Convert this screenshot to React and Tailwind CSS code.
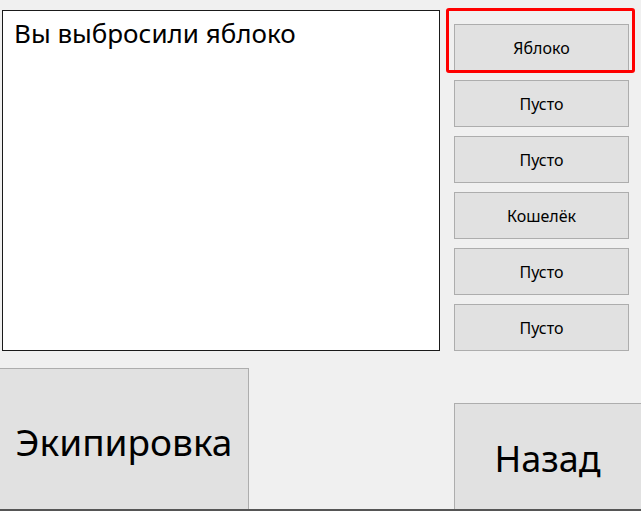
export default function App() {
  const slots = ["Яблоко", "Пусто", "Пусто", "Кошелёк", "Пусто", "Пусто"];
  return (
    <div
      className="relative w-[641px] h-[511px] overflow-hidden bg-[#f0f0f0] text-black flex flex-col font-['Comic_Sans_MS','Noto_Sans','DejaVu_Sans',sans-serif]"
    >
      <div className="flex pt-[10px]">
        <div className="shrink-0 ml-[2px] w-[438px] h-[341px] bg-white border border-[#1a1a1a] px-[11px] pt-[4px] text-[26px] leading-[36px]">
          Вы выбросили яблоко
        </div>
        <div className="relative shrink-0 ml-[14px] pt-[14px] flex flex-col gap-[9px]">
          {slots.map((s, i) => (
            <div
              key={i}
              className="w-[175px] h-[47px] bg-[#e1e1e1] border border-[#adadad] flex items-center justify-center text-[16px]"
            >
              {s}
            </div>
          ))}
          <div className="absolute left-[-8px] top-[-2px] w-[189px] h-[65px] border-[3px] border-[#ff0000] rounded-[3px] pointer-events-none" />
        </div>
      </div>
      <div className="mt-[17px] flex items-end h-[141px]">
        <div className="shrink-0 w-[249px] h-[141px] bg-[#e1e1e1] border-t border-r border-[#adadad] flex items-center justify-center text-[37px] pt-[6px]">
          Экипировка
        </div>
        <div className="shrink-0 ml-[205px] w-[190px] h-[106px] bg-[#e1e1e1] border-t border-l border-[#adadad] flex items-center justify-center text-[36px] pt-[4px] pr-[4px]">
          Назад
        </div>
      </div>
      <div className="h-[2px] bg-[#555555]" />
    </div>
  );
}
